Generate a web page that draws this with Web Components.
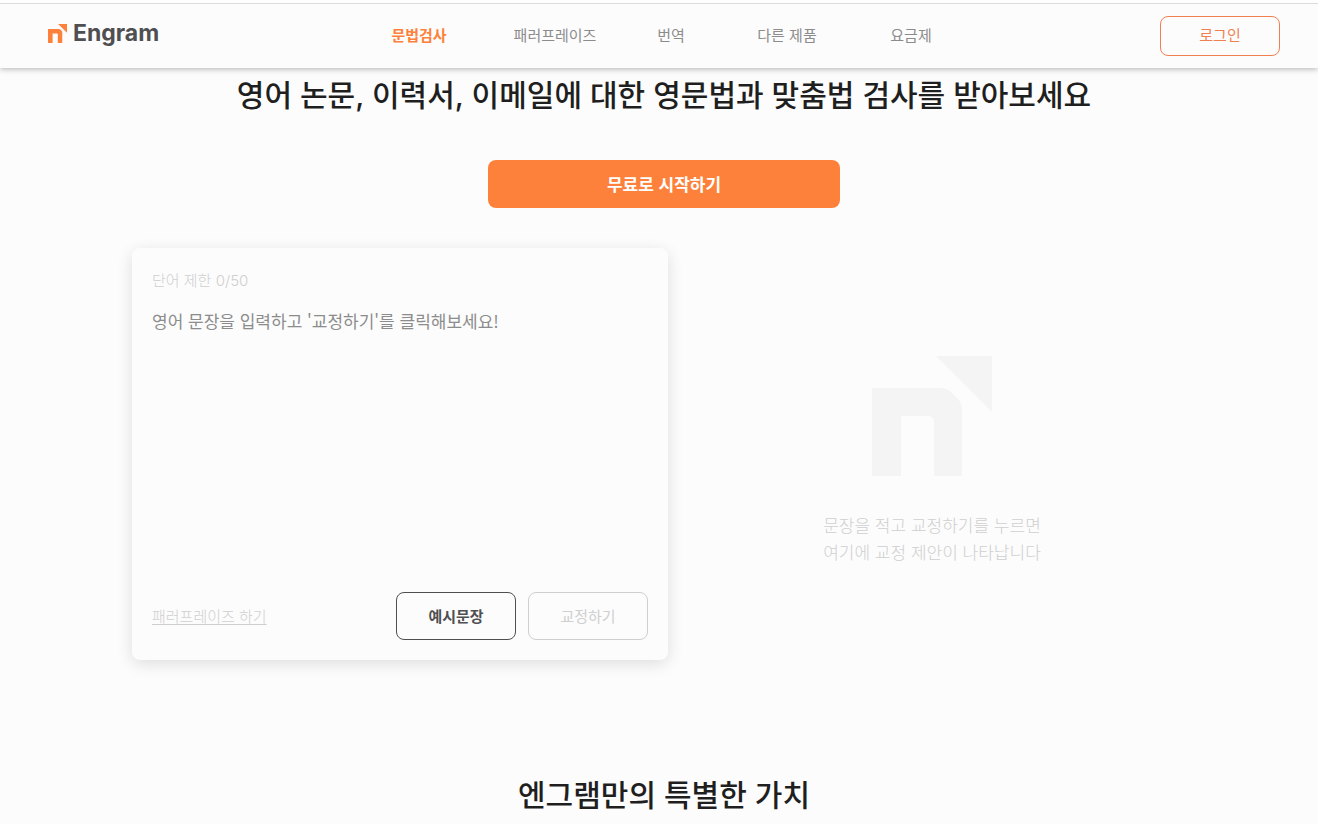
<!DOCTYPE html>
<html lang="ko">
<head>
<meta charset="utf-8">
<meta name="viewport" content="width=device-width, initial-scale=1">
<title>Engram</title>
<style>
    :root {
        --orange: #fd813b;
        --orange-line: #f08050;
        --ink: #1f1f1f;
        --dark: #4f4f51;
        --gray: #8c8c8c;
        --light: #cfcfcf;
        --surface: #fcfcfc;
        --latin-first: Inter, "Noto Sans CJK KR", sans-serif;
    }
    body {
        margin: 0;
        background: var(--surface);
        color: var(--ink);
        font-family: "Noto Sans CJK KR", sans-serif;
        font-size: 15px;
        line-height: 24px;
    }
    engram-header { font-family: var(--latin-first); }
</style>
</head>
<body>
<engram-header>
    <engram-nav-item href="#grammar" active>문법검사</engram-nav-item>
    <engram-nav-item href="#paraphrase">패러프레이즈</engram-nav-item>
    <engram-nav-item href="#translate">번역</engram-nav-item>
    <engram-nav-item href="#products">다른 제품</engram-nav-item>
    <engram-nav-item href="#pricing">요금제</engram-nav-item>
    <engram-button slot="action" variant="login">로그인</engram-button>
</engram-header>
<engram-main>
    <engram-title>영어 논문, 이력서, 이메일에 대한 영문법과 맞춤법 검사를 받아보세요</engram-title>
    <engram-button slot="start" variant="primary">무료로 시작하기</engram-button>
    <engram-editor slot="demo" limit="50" placeholder="영어 문장을 입력하고 '교정하기'를 클릭해보세요!">
        <engram-button variant="dark">예시문장</engram-button>
        <engram-button variant="muted" disabled>교정하기</engram-button>
    </engram-editor>
    <engram-empty slot="demo">문장을 적고 교정하기를 누르면<br>여기에 교정 제안이 나타납니다</engram-empty>
    <engram-title slot="values">엔그램만의 특별한 가치</engram-title>
</engram-main>
<script>
class EngramElement extends HTMLElement {
    connectedCallback() {
        if (this.shadowRoot) return;
        this.attachShadow({mode: 'open'});
        this.shadowRoot.innerHTML = this.render();
    }
}

class EngramMark extends EngramElement {
    render() {
        return `
            <style>
                :host { display: block; }
                svg { display: block; width: 100%; height: 100%; fill: currentColor; }
            </style>
            <svg viewBox="0 0 120 120" aria-hidden="true">
                <path d="M0 32H68Q75 32 80 37L85 42Q90 47 90 54V120H62V66Q62 60 56 60H29V120H0Z"/>
                <path d="M64 0H120V56Z"/>
            </svg>
        `;
    }
}

class EngramNavItem extends EngramElement {
    render() {
        return `
            <style>
                :host { display: block; text-align: center; }
                a { color: var(--gray); text-decoration: none; white-space: nowrap; }
                :host([active]) a { color: var(--orange); font-weight: 700; }
            </style>
            <a href="${this.getAttribute('href')}"><slot></slot></a>
        `;
    }
}

class EngramHeader extends EngramElement {
    render() {
        return `
            <style>
                :host {
                    display: block;
                    position: sticky;
                    top: 0;
                    z-index: 1;
                    background: var(--surface);
                    box-shadow: 0 1px 6px rgba(0, 0, 0, 0.3);
                }
                .strip { height: 3px; background: #fff; }
                header {
                    display: grid;
                    grid-template-columns: 1fr auto 1fr;
                    align-items: center;
                    height: 64px;
                    padding: 0 38px;
                    border-top: 1px solid #dcdcdc;
                }
                .brand {
                    display: flex;
                    align-items: center;
                    gap: 6px;
                    padding: 0 0 6px 10px;
                    color: var(--dark);
                    font-size: 23px;
                    font-weight: 700;
                    text-decoration: none;
                }
                engram-mark { width: 19px; height: 19px; color: var(--orange); }
                nav {
                    display: grid;
                    grid-template-columns: 140px 100px 100px 100px 116px;
                    gap: 16px;
                }
                .action { justify-self: end; }
            </style>
            <div class="strip"></div>
            <header>
                <a class="brand" href="#"><engram-mark></engram-mark><span>Engram</span></a>
                <nav><slot></slot></nav>
                <div class="action"><slot name="action"></slot></div>
            </header>
        `;
    }
}

class EngramButton extends EngramElement {
    render() {
        return `
            <style>
                :host { display: block; width: 120px; height: 48px; }
                button {
                    display: block;
                    box-sizing: border-box;
                    width: 100%;
                    height: 100%;
                    padding: 0;
                    border: 1px solid;
                    border-radius: 8px;
                    background: none;
                    font: inherit;
                    cursor: pointer;
                }
                :host([variant=login]) { height: 40px; }
                :host([variant=login]) button { color: var(--orange-line); }
                :host([variant=primary]) { width: 352px; }
                :host([variant=primary]) button {
                    border: 0;
                    background: var(--orange);
                    color: #fff;
                    font-size: 17px;
                    font-weight: 700;
                }
                :host([variant=dark]) button { color: var(--dark); font-weight: 700; }
                :host([variant=muted]) button { color: var(--light); cursor: default; }
            </style>
            <button type="button" ${this.hasAttribute('disabled') ? 'disabled' : ''}><slot></slot></button>
        `;
    }
}

class EngramTitle extends EngramElement {
    render() {
        return `
            <style>
                :host { display: block; text-align: center; }
                h2 {
                    margin: 0;
                    font-family: var(--latin-first);
                    font-size: 30px;
                    font-weight: 500;
                    line-height: 46px;
                    padding-bottom: 2px;
                }
            </style>
            <h2><slot></slot></h2>
        `;
    }
}

class EngramEditor extends EngramElement {
    connectedCallback() {
        super.connectedCallback();
        const text = this.shadowRoot.querySelector('textarea');
        const count = this.shadowRoot.querySelector('label');
        text.addEventListener('input', () => {
            const words = text.value.split(/\s+/).filter(Boolean).length;
            count.textContent = `단어 제한 ${words}/${this.getAttribute('limit')}`;
        });
    }
    render() {
        return `
            <style>
                :host {
                    display: flex;
                    flex-direction: column;
                    box-sizing: border-box;
                    min-height: 412px;
                    padding: 20px;
                    border-radius: 8px;
                    background: var(--surface);
                    box-shadow: 0 4px 16px rgba(0, 0, 0, 0.12);
                }
                label {
                    color: var(--light);
                    font-family: var(--latin-first);
                    font-weight: 300;
                    line-height: 26px;
                }
                textarea {
                    flex: 1;
                    margin: 13px 0;
                    padding: 0;
                    border: 0;
                    outline: 0;
                    resize: none;
                    background: none;
                    color: var(--ink);
                    font: inherit;
                    font-size: 17px;
                    line-height: 27px;
                }
                textarea::placeholder { color: var(--gray); opacity: 1; }
                footer { display: flex; align-items: center; gap: 12px; }
                a {
                    margin-right: auto;
                    color: var(--light);
                    font-weight: 300;
                    text-underline-offset: 2px;
                }
            </style>
            <label for="text">단어 제한 0/${this.getAttribute('limit')}</label>
            <textarea id="text" spellcheck="false" placeholder="${this.getAttribute('placeholder')}"></textarea>
            <footer>
                <a href="#paraphrase">패러프레이즈 하기</a>
                <slot></slot>
            </footer>
        `;
    }
}

class EngramEmpty extends EngramElement {
    render() {
        return `
            <style>
                :host {
                    display: flex;
                    flex-direction: column;
                    align-items: center;
                    gap: 35px;
                    padding-top: 108px;
                }
                engram-mark { width: 120px; height: 120px; color: #f4f4f4; }
                p {
                    margin: 0;
                    color: var(--light);
                    font-size: 17px;
                    font-weight: 300;
                    line-height: 27px;
                    text-align: center;
                }
            </style>
            <engram-mark></engram-mark>
            <p><slot></slot></p>
        `;
    }
}

class EngramMain extends EngramElement {
    render() {
        return `
            <style>
                :host { display: block; padding: 4px 0 0 10px; }
                main { display: flex; flex-direction: column; align-items: center; gap: 40px; }
                .demo {
                    display: grid;
                    grid-template-columns: 67fr 66fr;
                    width: 100%;
                    max-width: 1064px;
                }
                .values { margin-top: 72px; }
            </style>
            <main>
                <slot></slot>
                <slot name="start"></slot>
                <div class="demo"><slot name="demo"></slot></div>
                <div class="values"><slot name="values"></slot></div>
            </main>
        `;
    }
}

customElements.define('engram-mark', EngramMark);
customElements.define('engram-nav-item', EngramNavItem);
customElements.define('engram-header', EngramHeader);
customElements.define('engram-button', EngramButton);
customElements.define('engram-title', EngramTitle);
customElements.define('engram-editor', EngramEditor);
customElements.define('engram-empty', EngramEmpty);
customElements.define('engram-main', EngramMain);
</script>
</body>
</html>
